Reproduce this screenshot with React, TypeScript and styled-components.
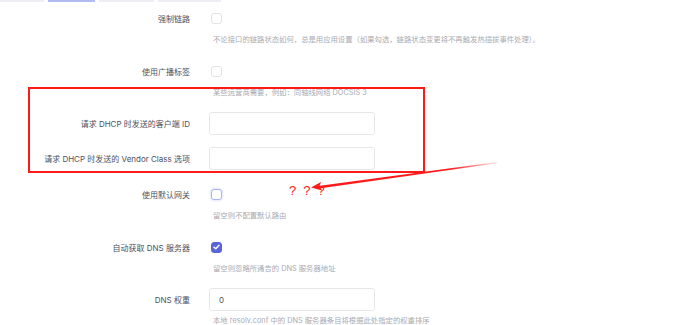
import React from "react";
import styled, { createGlobalStyle } from "styled-components";

const Global = createGlobalStyle`
  html, body { margin: 0; padding: 0; background: #fff; }
  body { font-family: "Inter", "Noto Sans CJK SC", sans-serif; }
`;

const Page = styled.div`
  position: relative;
  width: 690px;
  height: 325px;
  overflow: hidden;
  background: #fff;
`;

const Tabs = styled.div`
  display: flex;
  gap: 4px;
  height: 2px;
  margin-bottom: 4px;
`;

const Tab = styled.div<{ $w: number; $active?: boolean }>`
  width: ${(p) => p.$w}px;
  height: 2px;
  background: ${(p) => (p.$active ? "#b3bbf3" : "#eceef3")};
`;

const Form = styled.div`
  display: flex;
  flex-direction: column;
  gap: 12px;
`;

const Row = styled.div`
  display: grid;
  grid-template-columns: 190px 166px;
  column-gap: 19px;
  align-items: start;
`;

const Label = styled.div<{ $h: number }>`
  height: ${(p) => p.$h}px;
  display: flex;
  align-items: center;
  justify-content: flex-end;
  font-size: 8px;
  color: #4d505d;
  white-space: nowrap;
`;

const Field = styled.div`
  display: flex;
  flex-direction: column;
`;

const Control = styled.div`
  height: 24px;
  display: flex;
  align-items: center;
  padding-left: 2px;
`;

const Box = styled.div<{ $checked?: boolean; $focus?: boolean }>`
  width: 9px;
  height: 9px;
  border-radius: 3px;
  border: 1px solid
    ${(p) => (p.$checked ? "#5866d9" : p.$focus ? "#a9b2f2" : "#e1e3e8")};
  background: ${(p) => (p.$checked ? "#5866d9" : "#fff")};
  box-shadow: ${(p) => (p.$focus ? "0 0 0 1.5px #eef0fd" : "none")};
  display: flex;
  align-items: center;
  justify-content: center;
`;

const Input = styled.div`
  box-sizing: border-box;
  width: 166px;
  height: 23px;
  border: 1px solid #e6e7eb;
  border-radius: 3px;
  display: flex;
  align-items: center;
  padding-left: 9px;
  font-size: 8px;
  color: #555;
`;

const Desc = styled.div`
  margin-top: 3px;
  padding-left: 4px;
  height: 14px;
  line-height: 14px;
  font-size: 7.35px;
  color: #a9abb3;
  white-space: nowrap;
`;

const Highlight = styled.div`
  position: absolute;
  left: 28px;
  top: 87px;
  width: 393px;
  height: 82px;
  border: 2px solid #ff1a1a;
`;

const Marks = styled.div`
  position: absolute;
  left: 289px;
  top: 183px;
  font-size: 13px;
  color: #ff2020;
  letter-spacing: 7px;
  font-family: "Liberation Sans", sans-serif;
`;

const Arrow = styled.svg`
  position: absolute;
  left: 0;
  top: 0;
  pointer-events: none;
`;

const Check = () => (
  <svg width="7" height="6" viewBox="0 0 7 6">
    <path d="M1 3.2 L2.8 4.8 L6 1.2" fill="none" stroke="#fff" strokeWidth="1.4" strokeLinecap="round" strokeLinejoin="round" />
  </svg>
);

type RowProps = {
  label: string;
  kind: "check" | "input";
  checked?: boolean;
  focus?: boolean;
  value?: string;
  desc?: string;
};

const FormRow = ({ label, kind, checked, focus, value, desc }: RowProps) => (
  <Row>
    <Label $h={kind === "input" ? 23 : 24}>{label}</Label>
    <Field>
      {kind === "check" ? (
        <Control>
          <Box $checked={checked} $focus={focus}>{checked && <Check />}</Box>
        </Control>
      ) : (
        <Input>{value}</Input>
      )}
      {desc && <Desc>{desc}</Desc>}
    </Field>
  </Row>
);

export default function App() {
  return (
    <Page>
      <Global />
      <Tabs>
        <Tab $w={44} />
        <Tab $w={47} $active />
        <Tab $w={55} />
        <Tab $w={63} />
      </Tabs>
      <Form>
        <FormRow
          label="强制链路"
          kind="check"
          desc="不论接口的链路状态如何，总是用应用设置（如果勾选，链路状态变更将不再触发热插拔事件处理）。"
        />
        <FormRow label="使用广播标签" kind="check" desc="某些运营商需要，例如：同轴线网络 DOCSIS 3" />
        <FormRow label="请求 DHCP 时发送的客户端 ID" kind="input" />
        <FormRow label="请求 DHCP 时发送的 Vendor Class 选项" kind="input" />
        <FormRow label="使用默认网关" kind="check" focus desc="留空则不配置默认路由" />
        <FormRow label="自动获取 DNS 服务器" kind="check" checked desc="留空则忽略所通告的 DNS 服务器地址" />
        <FormRow
          label="DNS 权重"
          kind="input"
          value="0"
          desc="本地 resolv.conf 中的 DNS 服务器条目将根据此处指定的权重排序"
        />
      </Form>
      <Highlight />
      <Marks>???</Marks>
      <Arrow width="690" height="325" viewBox="0 0 690 325">
        <defs>
          <linearGradient id="fade" x1="312" y1="187" x2="497" y2="162" gradientUnits="userSpaceOnUse">
            <stop offset="0" stopColor="#ff1a1a" stopOpacity="1" />
            <stop offset="0.75" stopColor="#ff1a1a" stopOpacity="1" />
            <stop offset="1" stopColor="#ff1a1a" stopOpacity="0.1" />
          </linearGradient>
        </defs>
        <path d="M318 186 L497 162 L497 163.2 L319 188.5 Z" fill="url(#fade)" />
        <path d="M311 187.5 L321 182 L319.5 186 L322 190.5 Z" fill="#ff1a1a" />
      </Arrow>
    </Page>
  );
}
